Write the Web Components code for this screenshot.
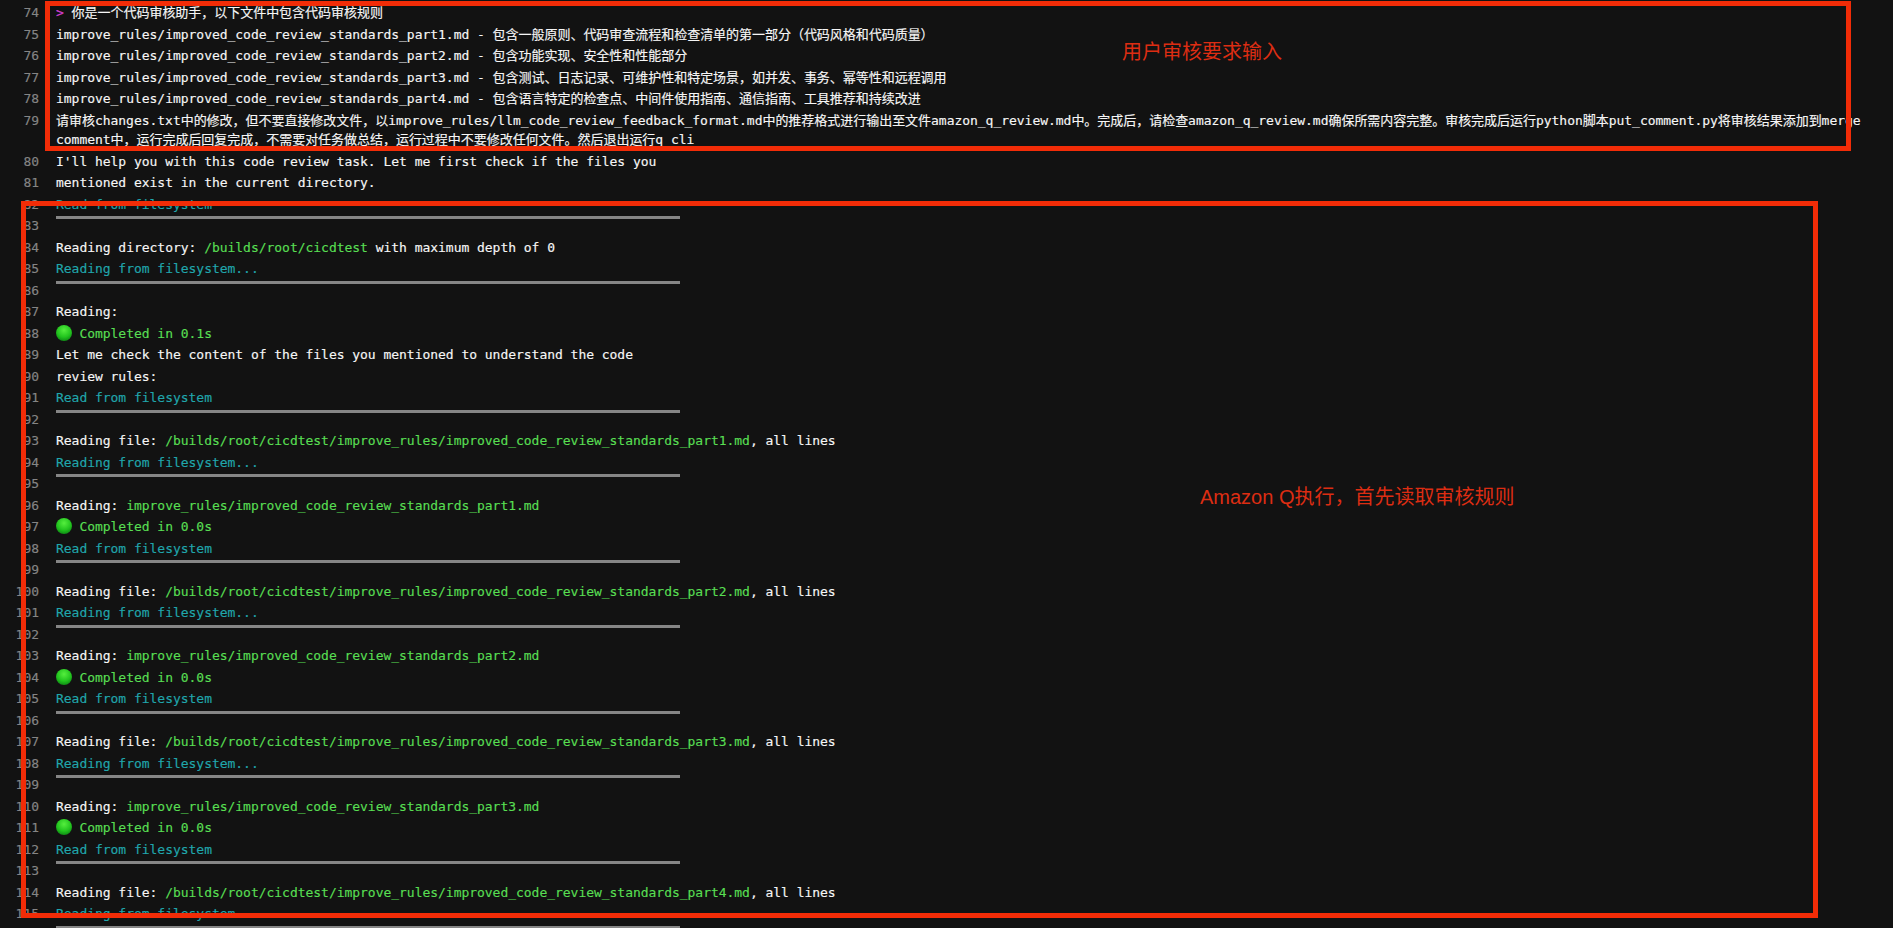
<!DOCTYPE html>
<html lang="zh">
<head>
<meta charset="utf-8">
<title>Amazon Q</title>
<style>
html,body{margin:0;height:100%;background:#121212;overflow:hidden}
</style>
</head>
<body>
<term-view>
<term-line n="74"><term-c kind="prompt">&gt;</term-c> 你是一个代码审核助手，以下文件中包含代码审核规则</term-line>
<term-line n="75">improve_rules/improved_code_review_standards_part1.md - 包含一般原则、代码审查流程和检查清单的第一部分（代码风格和代码质量）</term-line>
<term-line n="76">improve_rules/improved_code_review_standards_part2.md - 包含功能实现、安全性和性能部分</term-line>
<term-line n="77">improve_rules/improved_code_review_standards_part3.md - 包含测试、日志记录、可维护性和特定场景，如并发、事务、幂等性和远程调用</term-line>
<term-line n="78">improve_rules/improved_code_review_standards_part4.md - 包含语言特定的检查点、中间件使用指南、通信指南、工具推荐和持续改进</term-line>
<term-line n="79" tight>请审核changes.txt中的修改，但不要直接修改文件，以improve_rules/llm_code_review_feedback_format.md中的推荐格式进行输出至文件amazon_q_review.md中。完成后，请检查amazon_q_review.md确保所需内容完整。审核完成后运行python脚本put_comment.py将审核结果添加到merge</term-line>
<term-line>comment中，运行完成后回复完成，不需要对任务做总结，运行过程中不要修改任何文件。然后退出运行q cli</term-line>
<term-line n="80">I'll help you with this code review task. Let me first check if the files you</term-line>
<term-line n="81">mentioned exist in the current directory.</term-line>
<term-line n="82"><term-c kind="cyan">Read from filesystem</term-c></term-line>
<term-rule n="83"></term-rule>
<term-line n="84">Reading directory: <term-c kind="green">/builds/root/cicdtest</term-c> with maximum depth of 0</term-line>
<term-line n="85"><term-c kind="cyan">Reading from filesystem...</term-c></term-line>
<term-rule n="86"></term-rule>
<term-line n="87">Reading:</term-line>
<term-line n="88"><green-dot></green-dot> <term-c kind="green">Completed in 0.1s</term-c></term-line>
<term-line n="89">Let me check the content of the files you mentioned to understand the code</term-line>
<term-line n="90">review rules:</term-line>
<term-line n="91"><term-c kind="cyan">Read from filesystem</term-c></term-line>
<term-rule n="92"></term-rule>
<term-line n="93">Reading file: <term-c kind="green">/builds/root/cicdtest/improve_rules/improved_code_review_standards_part1.md</term-c>, all lines</term-line>
<term-line n="94"><term-c kind="cyan">Reading from filesystem...</term-c></term-line>
<term-rule n="95"></term-rule>
<term-line n="96">Reading: <term-c kind="green">improve_rules/improved_code_review_standards_part1.md</term-c></term-line>
<term-line n="97"><green-dot></green-dot> <term-c kind="green">Completed in 0.0s</term-c></term-line>
<term-line n="98"><term-c kind="cyan">Read from filesystem</term-c></term-line>
<term-rule n="99"></term-rule>
<term-line n="100">Reading file: <term-c kind="green">/builds/root/cicdtest/improve_rules/improved_code_review_standards_part2.md</term-c>, all lines</term-line>
<term-line n="101"><term-c kind="cyan">Reading from filesystem...</term-c></term-line>
<term-rule n="102"></term-rule>
<term-line n="103">Reading: <term-c kind="green">improve_rules/improved_code_review_standards_part2.md</term-c></term-line>
<term-line n="104"><green-dot></green-dot> <term-c kind="green">Completed in 0.0s</term-c></term-line>
<term-line n="105"><term-c kind="cyan">Read from filesystem</term-c></term-line>
<term-rule n="106"></term-rule>
<term-line n="107">Reading file: <term-c kind="green">/builds/root/cicdtest/improve_rules/improved_code_review_standards_part3.md</term-c>, all lines</term-line>
<term-line n="108"><term-c kind="cyan">Reading from filesystem...</term-c></term-line>
<term-rule n="109"></term-rule>
<term-line n="110">Reading: <term-c kind="green">improve_rules/improved_code_review_standards_part3.md</term-c></term-line>
<term-line n="111"><green-dot></green-dot> <term-c kind="green">Completed in 0.0s</term-c></term-line>
<term-line n="112"><term-c kind="cyan">Read from filesystem</term-c></term-line>
<term-rule n="113"></term-rule>
<term-line n="114">Reading file: <term-c kind="green">/builds/root/cicdtest/improve_rules/improved_code_review_standards_part4.md</term-c>, all lines</term-line>
<term-line n="115"><term-c kind="cyan">Reading from filesystem...</term-c></term-line>
<term-rule></term-rule>
<red-box slot="overlay" style="left:45px;top:1px;width:1806px;height:150px">
  <red-label style="left:1072px;top:32px">用户审核要求输入</red-label>
</red-box>
<red-box slot="overlay" style="left:21px;top:201px;width:1797px;height:717px">
  <red-label style="left:1174px;top:277px">Amazon Q执行，首先读取审核规则</red-label>
</red-box>
</term-view>
<script>
function def(name, html, after){
  customElements.define(name, class extends HTMLElement{
    constructor(){
      super();
      this.attachShadow({mode:'open'}).innerHTML = html;
    }
    connectedCallback(){ if(after) after(this); }
  });
}
const MONO = '"DejaVu Sans Mono","Noto Sans CJK SC",monospace';
def('term-view', `<style>
  :host{display:block;position:relative;width:1893px;height:928px;overflow:hidden;background:#121212;color:#f6f6f6;
    font:13px/21.5px ${MONO};letter-spacing:-.03px;-webkit-text-stroke:.15px;--num:#858585}
  .rows{display:flex;flex-direction:column;padding-top:2.25px}
</style><div class="rows"><slot></slot></div><slot name="overlay"></slot>`);
const GUTTER = `:host{display:grid;grid-template-columns:39px 1fr;column-gap:17px;height:21.5px;white-space:pre}
  :host([tight]){height:19.5px}
  .n{color:var(--num);text-align:right}`;
const setN = el=>{el.shadowRoot.querySelector('.n').textContent = el.getAttribute('n')||'';};
def('term-line', `<style>${GUTTER}</style><span class="n"></span><span class="t"><slot></slot></span>`, setN);
def('term-rule', `<style>${GUTTER}
  .bar{display:block;width:624px;height:3px;background:#868686;margin-top:1px}
</style><span class="n"></span><span class="bar"></span>`, setN);
def('term-c', `<style>
  :host{display:inline}
  :host([kind=green]){color:#58de52}
  :host([kind=cyan]){color:#20a6ac}
  :host([kind=prompt]){color:#d23fd0}
</style><slot></slot>`);
def('green-dot', `<style>
  :host{display:inline-block;width:15.6px;height:16px;vertical-align:-3px}
  svg{display:block}
</style><svg width="16" height="16" viewBox="0 0 16 16" aria-hidden="true">
  <defs><radialGradient id="g" cx=".5" cy=".32" r=".72">
    <stop offset="0" stop-color="#55ee3e"/><stop offset=".6" stop-color="#22c41e"/><stop offset="1" stop-color="#0c8414"/>
  </radialGradient></defs><circle cx="8" cy="8" r="8" fill="url(#g)"/></svg>`);
def('red-box', `<style>
  :host{display:block;position:absolute;box-sizing:border-box;border:5.5px solid #f22c07}
</style><slot></slot>`);
def('red-label', `<style>
  :host{display:block;position:absolute;white-space:nowrap;color:#dd2d12;letter-spacing:0;-webkit-text-stroke:0;
    font:20px/28px "Liberation Sans","Noto Sans CJK SC",sans-serif}
</style><slot></slot>`);
</script>
</body>
</html>
